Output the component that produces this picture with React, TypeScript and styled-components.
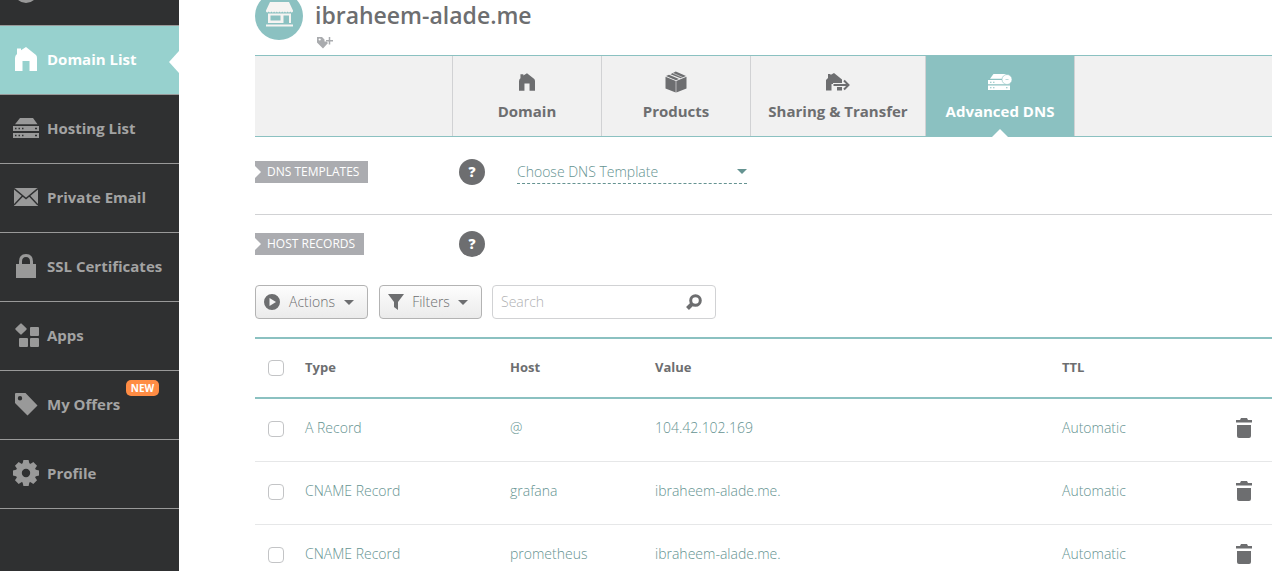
import React from "react";
import styled, { createGlobalStyle, css } from "styled-components";

const teal = "#8bc1c1";
const linkTeal = "#659391";
const grey = "#6d6e70";
const rule = "#d1d2d4";

const GlobalStyle = createGlobalStyle`
  * { box-sizing: border-box; }
  body {
    margin: 0;
    background: #fff;
    color: ${grey};
    font: 350 14px/20px "Open Sans", "Noto Sans", sans-serif;
  }
  button, input, select { font: inherit; color: inherit; }
  svg { display: block; flex: none; }
`;

const Shell = styled.div`
  display: flex;
  height: 100vh;
  overflow: hidden;
`;

const Sidebar = styled.nav`
  flex: none;
  width: 179px;
  background: #2f3031;
  overflow: hidden;
`;

const NavList = styled.ul`
  list-style: none;
  margin: -43px 0 0;
  padding: 0;
`;

const NavLink = styled.a<{ $active?: boolean }>`
  position: relative;
  display: flex;
  align-items: center;
  gap: 8px;
  height: 69px;
  padding: 0 0 2px 13px;
  border-bottom: 1px solid #999;
  color: #a3a3a3;
  font-size: 15px;
  font-weight: 700;
  text-decoration: none;
  ${(p) =>
    p.$active &&
    css`
      background: #97d1ce;
      color: #fff;
      &::after {
        content: "";
        position: absolute;
        right: 0;
        top: 25px;
        border: solid transparent;
        border-width: 11px 10px 11px 0;
        border-right-color: #fff;
      }
    `}
`;

const NavIcon = styled.span`
  display: flex;
  justify-content: center;
  width: 26px;
  color: #999;
  a[aria-current] & { color: #fff; }
`;

const NewBadge = styled.span`
  position: absolute;
  top: 9px;
  left: 126px;
  width: 33px;
  border-radius: 5px;
  background: #ff8c44;
  color: #fff;
  font-size: 10px;
  font-weight: 700;
  line-height: 16px;
  text-align: center;
`;

const Main = styled.main`
  flex: 1;
  min-width: 0;
  padding: 0 2px 0 76px;
`;

const Header = styled.header`
  display: flex;
  gap: 12px;
  height: 55px;
`;

const Avatar = styled.div`
  display: flex;
  align-items: flex-end;
  justify-content: center;
  width: 48px;
  height: 48px;
  margin-top: -8px;
  padding-bottom: 13px;
  border-radius: 50%;
  background: ${teal};
`;

const Title = styled.h1`
  margin: 0;
  font-size: 23px;
  line-height: 31px;
  font-weight: 650;
`;

const AddTag = styled.button`
  display: block;
  margin: 5px 0 0 2px;
  padding: 0;
  border: 0;
  background: none;
  && { color: #a9abae; }
`;

const Tabs = styled.nav`
  display: flex;
  height: 82px;
  padding-left: 197px;
  background: #f1f1f1;
  border: solid ${teal};
  border-width: 1px 0;
`;

const Tab = styled.a<{ $wide?: boolean; $active?: boolean }>`
  position: relative;
  display: flex;
  flex-direction: column;
  align-items: center;
  gap: 8px;
  width: ${(p) => (p.$wide ? 175 : 149)}px;
  padding-top: 15px;
  border-left: 1px solid ${rule};
  color: ${grey};
  font-size: 15px;
  font-weight: 700;
  text-decoration: none;
  white-space: nowrap;
  &:last-child { width: 150px; border-right: 1px solid ${rule}; }
  ${(p) =>
    p.$active &&
    css`
      background: ${teal};
      color: #fff;
      &::after {
        content: "";
        position: absolute;
        bottom: -1px;
        left: 66px;
        border: solid transparent;
        border-width: 0 8px 8px;
        border-bottom-color: #fff;
      }
    `}
`;

const TabIcon = styled.span`
  display: flex;
  align-items: center;
  height: 22px;
`;

const Section = styled.section<{ $ruled?: boolean }>`
  display: flex;
  align-items: center;
  height: ${(p) => (p.$ruled ? 78 : 58)}px;
  padding-bottom: ${(p) => (p.$ruled ? 7 : 0)}px;
  border-bottom: ${(p) => (p.$ruled ? `1px solid ${rule}` : "0")};
`;

const RibbonCell = styled.div`
  width: 204px;
`;

const Ribbon = styled.h2`
  position: relative;
  display: inline-block;
  margin: 0;
  padding: 0 9px 0 12px;
  background: #abacb0;
  color: #fff;
  font-size: 12px;
  font-weight: 400;
  line-height: 22px;
  vertical-align: middle;
  &::before {
    content: "";
    position: absolute;
    left: 0;
    top: 5px;
    border: solid transparent;
    border-width: 6px 0 6px 6px;
    border-left-color: #fff;
  }
`;

const Help = styled.button`
  width: 26px;
  height: 26px;
  padding: 0;
  border: 0;
  border-radius: 50%;
  background: ${grey};
  && { color: #fff; font-size: 14px; font-weight: 800; }
`;

const TemplateField = styled.div`
  display: grid;
  align-items: center;
  width: 230px;
  margin-left: 32px;
  border-bottom: 1px dashed ${linkTeal};
  color: ${linkTeal};
  > * { grid-area: 1 / 1; }
  > svg { justify-self: end; pointer-events: none; }
`;

const TemplateSelect = styled.select`
  appearance: none;
  width: 100%;
  height: 22px;
  padding: 0;
  border: 0;
  background: none;
`;

const Toolbar = styled.div`
  display: flex;
  gap: 10px;
  padding: 12px 0 18px;
`;

const ToolButton = styled.button`
  display: flex;
  align-items: center;
  justify-content: space-between;
  width: 103px;
  height: 34px;
  padding: 0 13px 0 8px;
  border: 1px solid #b3b3b3;
  border-radius: 4px;
  background: linear-gradient(#fdfdfd, #ebebeb);
  &:first-child { width: 113px; margin-right: 1px; }
`;

const SearchBox = styled.label`
  display: flex;
  align-items: center;
  width: 224px;
  height: 34px;
  padding: 0 13px 0 8px;
  border: 1px solid ${rule};
  border-radius: 4px;
`;

const SearchInput = styled.input`
  flex: 1;
  min-width: 0;
  padding: 0;
  border: 0;
  outline: 0;
  background: none;
  &::placeholder { color: #b0b1b3; opacity: 1; }
`;

const Table = styled.table`
  width: 100%;
  table-layout: fixed;
  border-collapse: separate;
  border-spacing: 0;
  th, td { padding: 0; text-align: left; }
  th {
    height: 62px;
    padding-bottom: 2px;
    border: solid ${teal};
    border-width: 2px 0;
    font-weight: 700;
    font-size: 13px;
  }
  td {
    height: 63px;
    padding-bottom: 5px;
    border-bottom: 1px solid #e6e7e8;
    color: ${linkTeal};
  }
`;

const Col = styled.col<{ $w?: number }>`
  width: ${(p) => (p.$w ? `${p.$w}px` : "auto")};
`;

const Check = styled.input`
  appearance: none;
  display: block;
  width: 16px;
  height: 16px;
  margin: 2px 0 0 13px;
  border: 1px solid #c3c4c6;
  border-radius: 4px;
  background: #fff;
`;

const Delete = styled.button`
  display: block;
  margin: 1px 0 0 auto;
  padding: 0 20px 0 0;
  border: 0;
  background: none;
  && { color: ${grey}; }
`;

const HouseIcon = ({ w = 22, h = 24 }) => (
  <svg width={w} height={h} viewBox="0 0 22 24" fill="currentColor">
    <path d="M0 24V11Q0 8.500 2 7V1.500H6V3.200L11 0L21 8Q22 9 22 11V24H14.500V14H7.500V24Z" />
  </svg>
);

const ServerIcon = () => (
  <svg width="26" height="20" viewBox="0 0 26 20" fill="currentColor">
    <path d="M7 0H20L24.500 6.300H2Z" />
    <path fillRule="evenodd" d="M0 8H26V13H0ZM2 9.700V11.200H3.500V9.700ZM5.500 9.700V11.200H7V9.700ZM9 9.700V11.200H10.500V9.700ZM22 9.700V11.200H24V9.700Z" />
    <path fillRule="evenodd" d="M0 15H26V20H0ZM2 16.700V18.200H3.500V16.700ZM5.500 16.700V18.200H7V16.700ZM9 16.700V18.200H10.500V16.700ZM22 16.700V18.200H24V16.700Z" />
  </svg>
);

const MailIcon = () => (
  <svg width="24" height="18" viewBox="0 0 24 18">
    <path fill="currentColor" d="M0 0H24V18H0Z" />
    <path fill="none" stroke="#2f3031" strokeWidth="1.500" d="M0 .5L12 10.500L24 .5M0 17L8.500 8M24 17L15.500 8" />
  </svg>
);

const LockIcon = () => (
  <svg width="20" height="24" viewBox="0 0 20 24">
    <path fill="currentColor" d="M0 10H20V24H0Z" />
    <path fill="none" stroke="currentColor" strokeWidth="3" d="M4.500 11V7.500Q4.500 1.500 10 1.500T15.500 7.500V11" />
  </svg>
);

const AppsIcon = () => (
  <svg width="26" height="24" viewBox="0 0 26 24" fill="currentColor">
    <rect x="3.700" y="1.700" width="8.600" height="8.600" rx="1" transform="rotate(45 8 6)" />
    <rect x="17" y="4" width="9" height="9" rx="1" />
    <rect x="6" y="15" width="9" height="9" rx="1" />
    <rect x="17" y="15" width="9" height="9" rx="1" />
  </svg>
);

const OfferIcon = () => (
  <svg width="24" height="23" viewBox="0 0 24 23" fill="currentColor">
    <path fillRule="evenodd" d="M1 1Q1 0 2 0H11.500L23.500 12.500L13.500 22.500L1 10ZM6 3A2.200 2.200 0 1 0 6 7.400A2.200 2.200 0 1 0 6 3Z" />
  </svg>
);

const GearIcon = () => (
  <svg width="26" height="26" viewBox="-13 -13 26 26">
    <circle r="7.200" fill="none" stroke="currentColor" strokeWidth="6" />
    {[0, 45, 90, 135, 180, 225, 270, 315].map((a) => (
      <path key={a} fill="currentColor" transform={`rotate(${a})`} d="M-3.500 -9L-2.600 -13H2.600L3.500 -9Z" />
    ))}
  </svg>
);

const GaugeIcon = () => (
  <svg width="26" height="26" viewBox="0 0 26 26">
    <circle cx="13" cy="14" r="9.500" fill="none" stroke="currentColor" strokeWidth="5" />
  </svg>
);

const ShopIcon = () => (
  <svg width="27" height="25" viewBox="0 0 27 25" fill="#f6f4f2">
    <path d="M4 0H23L27 8.500V9.500Q25.700 11.500 24.300 9.500Q23 11.500 21.600 9.500Q20.300 11.500 18.900 9.500Q17.600 11.500 16.200 9.500Q14.900 11.500 13.500 9.500Q12.200 11.500 10.800 9.500Q9.500 11.500 8.100 9.500Q6.800 11.500 5.400 9.500Q4.100 11.500 2.700 9.500Q1.400 11.500 0 9.500V8.500Z" />
    <path fillRule="evenodd" d="M2 11.500H25V21H23V13.500H17.500V21H2ZM4.500 13.500V18.500H14.500V13.500Z" />
    <path d="M0 22.500H27V24.500H0Z" />
  </svg>
);

const TagPlusIcon = () => (
  <svg width="17" height="13" viewBox="0 0 17 13">
    <path fill="currentColor" fillRule="evenodd" d="M0 1H5L7.500 3.500V5.500H9.500L11 7L6 12.500L0 6.500ZM2.700 2.400A1.100 1.100 0 1 0 2.700 4.600A1.100 1.100 0 1 0 2.700 2.400Z" />
    <path fill="none" stroke="currentColor" strokeWidth="1.500" d="M9 4.700H16M12.500 1V8.500" />
  </svg>
);

const BoxIcon = () => (
  <svg width="22" height="22" viewBox="0 0 22 22" fill="currentColor">
    <path d="M.5 5.800L10.700 10V21.500L.5 17.500ZM21.500 5.800L11.300 10V21.500L21.500 17.500Z" />
    <path d="M1 5L4 3.800L14 8L11 9.300ZM5.500 3.200L10.800 .5L21 5L15.700 7.300Z" />
    <path d="M8 2.200L17.500 6.400" stroke="#f1f1f1" strokeWidth=".6" />
  </svg>
);

const TransferIcon = () => (
  <svg width="24" height="18" viewBox="0 0 24 18">
    <path fill="currentColor" d="M0 17.500V7L2 5V1H4.500V2L8 0L16 6.500V17.500H11V11H5.500V17.500Z" />
    <path fill="none" stroke="#f1f1f1" strokeWidth="4" d="M7 12H22" />
    <path fill="none" stroke="currentColor" strokeWidth="2" d="M7.500 12H22M18 7.500L22.500 12L18 16.500" />
  </svg>
);

const DnsIcon = () => (
  <svg width="24" height="18" viewBox="0 0 24 18" fill="currentColor">
    <path d="M5.500 1H18L15 5.800H2Z" />
    <path fillRule="evenodd" d="M0 7H22V11.200H0ZM2 8.700V9.700H3.500V8.700ZM5 8.700V9.700H6.500V8.700Z" />
    <path fillRule="evenodd" d="M0 12.500H22V17H0ZM2 14.200V15.200H3.500V14.200ZM5 14.200V15.200H6.500V14.200ZM18 14.200V15.200H19.500V14.200Z" />
    <circle cx="19" cy="6.500" r="5" stroke={teal} strokeWidth=".6" />
    <path d="M17.500 6.500H20.500" stroke={teal} strokeWidth=".6" />
  </svg>
);

const Caret = () => (
  <svg width="10" height="5" viewBox="0 0 10 5">
    <path fill="currentColor" d="M0 0H10L5 5Z" />
  </svg>
);

const PlayIcon = () => (
  <svg width="16" height="16" viewBox="0 0 16 16">
    <path fill="currentColor" fillRule="evenodd" d="M8 0A8 8 0 1 0 8 16A8 8 0 1 0 8 0ZM5.500 4L12 8L5.500 12Z" />
  </svg>
);

const FunnelIcon = () => (
  <svg width="16" height="16" viewBox="0 0 16 16">
    <path fill="currentColor" d="M0 0H16L10 8V16L6 13V8Z" />
  </svg>
);

const SearchIcon = () => (
  <svg width="16" height="16" viewBox="0 0 16 16" fill="none" stroke={grey}>
    <circle cx="9.500" cy="6.500" r="4.800" strokeWidth="3" />
    <path strokeWidth="4" d="M6 10L1.500 14.500" />
  </svg>
);

const TrashIcon = () => (
  <svg width="16" height="20" viewBox="0 0 16 20" fill="currentColor">
    <path d="M0 4.500V2H4L5 0H11L12 2H16V4.500Z" />
    <path d="M1 7H15V18Q15 20 13 20H3Q1 20 1 18Z" />
  </svg>
);

const navItems = [
  { label: "Domain List", icon: <HouseIcon />, active: true },
  { label: "Hosting List", icon: <ServerIcon /> },
  { label: "Private Email", icon: <MailIcon /> },
  { label: "SSL Certificates", icon: <LockIcon /> },
  { label: "Apps", icon: <AppsIcon /> },
  { label: "My Offers", icon: <OfferIcon />, isNew: true },
  { label: "Profile", icon: <GearIcon /> },
];

const records = [
  { type: "A Record", host: "@", value: "104.42.102.169", ttl: "Automatic" },
  { type: "CNAME Record", host: "grafana", value: "ibraheem-alade.me.", ttl: "Automatic" },
  { type: "CNAME Record", host: "prometheus", value: "ibraheem-alade.me.", ttl: "Automatic" },
];

export default function App() {
  return (
    <>
      <GlobalStyle />
      <Shell>
        <Sidebar aria-label="Account">
          <NavList>
            <li>
              <NavLink href="#dashboard" aria-label="Dashboard">
                <NavIcon><GaugeIcon /></NavIcon>
              </NavLink>
            </li>
            {navItems.map((item) => (
              <li key={item.label}>
                <NavLink href="#" $active={item.active} aria-current={item.active ? "page" : undefined}>
                  <NavIcon>{item.icon}</NavIcon>
                  {item.label}
                  {item.isNew && <NewBadge>NEW</NewBadge>}
                </NavLink>
              </li>
            ))}
          </NavList>
        </Sidebar>
        <Main>
          <Header>
            <Avatar><ShopIcon /></Avatar>
            <div>
              <Title>ibraheem-alade.me</Title>
              <AddTag aria-label="Add tag"><TagPlusIcon /></AddTag>
            </div>
          </Header>
          <Tabs aria-label="Domain settings">
            <Tab href="#"><TabIcon><HouseIcon w={16} h={18} /></TabIcon>Domain</Tab>
            <Tab href="#"><TabIcon><BoxIcon /></TabIcon>Products</Tab>
            <Tab href="#" $wide><TabIcon><TransferIcon /></TabIcon>Sharing &amp; Transfer</Tab>
            <Tab href="#" $active aria-current="page"><TabIcon><DnsIcon /></TabIcon>Advanced DNS</Tab>
          </Tabs>
          <Section $ruled>
            <RibbonCell><Ribbon>DNS TEMPLATES</Ribbon></RibbonCell>
            <Help aria-label="About DNS templates">?</Help>
            <TemplateField>
              <TemplateSelect aria-label="DNS template">
                <option>Choose DNS Template</option>
              </TemplateSelect>
              <Caret />
            </TemplateField>
          </Section>
          <Section>
            <RibbonCell><Ribbon>HOST RECORDS</Ribbon></RibbonCell>
            <Help aria-label="About host records">?</Help>
          </Section>
          <Toolbar>
            <ToolButton><PlayIcon />Actions<Caret /></ToolButton>
            <ToolButton><FunnelIcon />Filters<Caret /></ToolButton>
            <SearchBox>
              <SearchInput type="text" placeholder="Search" aria-label="Search" />
              <SearchIcon />
            </SearchBox>
          </Toolbar>
          <Table>
            <colgroup>
              <Col $w={50} />
              <Col $w={205} />
              <Col $w={145} />
              <Col />
              <Col $w={150} />
              <Col $w={60} />
            </colgroup>
            <thead>
              <tr>
                <th><Check type="checkbox" aria-label="Select all records" /></th>
                <th>Type</th>
                <th>Host</th>
                <th>Value</th>
                <th>TTL</th>
                <th />
              </tr>
            </thead>
            <tbody>
              {records.map((r) => (
                <tr key={r.host}>
                  <td><Check type="checkbox" aria-label={`Select ${r.host}`} /></td>
                  <td>{r.type}</td>
                  <td>{r.host}</td>
                  <td>{r.value}</td>
                  <td>{r.ttl}</td>
                  <td><Delete aria-label={`Delete ${r.host}`}><TrashIcon /></Delete></td>
                </tr>
              ))}
            </tbody>
          </Table>
        </Main>
      </Shell>
    </>
  );
}
